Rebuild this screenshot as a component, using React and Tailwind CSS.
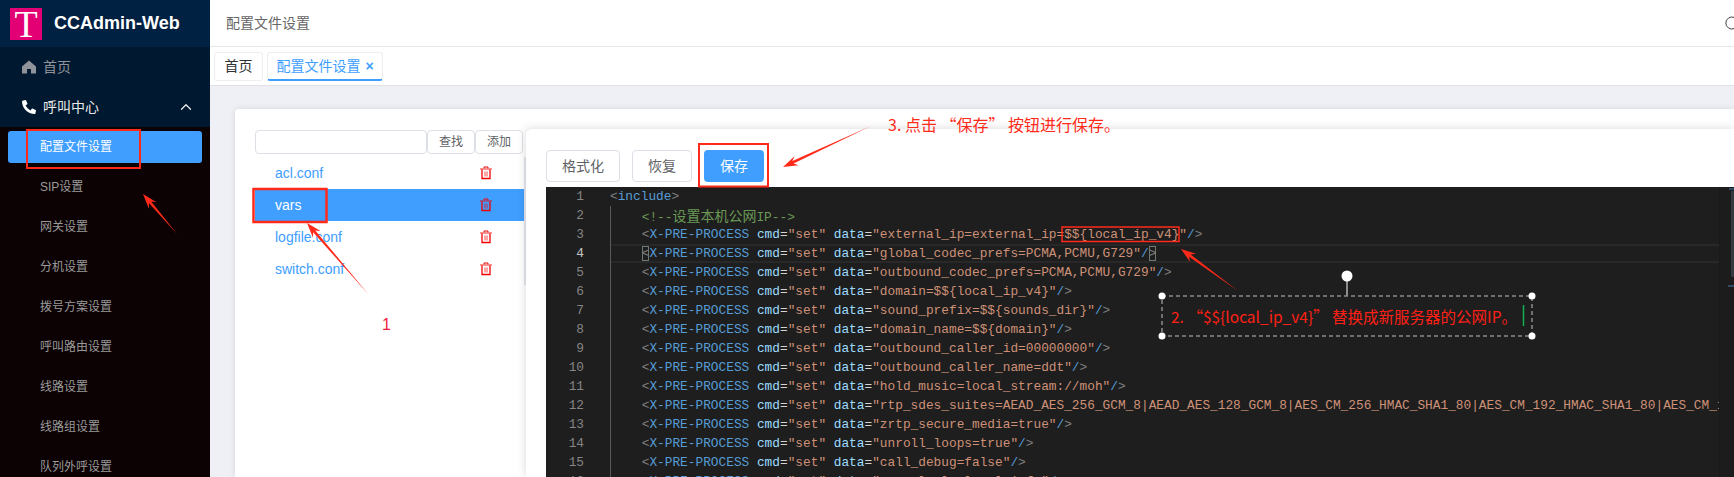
import { FaPhoneAlt } from "react-icons/fa";
import { ChevronUp } from "lucide-react";

const subMenus = ["配置文件设置", "SIP设置", "网关设置", "分机设置", "拨号方案设置", "呼叫路由设置", "线路设置", "线路组设置", "队列外呼设置"];
const files = ["acl.conf", "vars", "logfile.conf", "switch.conf"];

// value of data="..." for each X-PRE-PROCESS line
const codeLines = [
  { n: 3, v: "external_ip=external_ip=$${local_ip_v4}" },
  { n: 4, v: "global_codec_prefs=PCMA,PCMU,G729", active: true },
  { n: 5, v: "outbound_codec_prefs=PCMA,PCMU,G729" },
  { n: 6, v: "domain=$${local_ip_v4}" },
  { n: 7, v: "sound_prefix=$${sounds_dir}" },
  { n: 8, v: "domain_name=$${domain}" },
  { n: 9, v: "outbound_caller_id=00000000" },
  { n: 10, v: "outbound_caller_name=ddt" },
  { n: 11, v: "hold_music=local_stream://moh" },
  { n: 12, v: "rtp_sdes_suites=AEAD_AES_256_GCM_8|AEAD_AES_128_GCM_8|AES_CM_256_HMAC_SHA1_80|AES_CM_192_HMAC_SHA1_80|AES_CM_128_HMAC_SHA1_80|AES_CM_128_HMAC_SHA1_32" },
  { n: 13, v: "zrtp_secure_media=true" },
  { n: 14, v: "unroll_loops=true" },
  { n: 15, v: "call_debug=false" },
  { n: 16, v: "console_loglevel=info" },
];

// tapered annotation arrow, thin at the tail
const arrowPoints = (x1, y1, x2, y2) => {
  const len = Math.hypot(x2 - x1, y2 - y1);
  const ux = (x2 - x1) / len;
  const uy = (y2 - y1) / len;
  const px = -uy;
  const py = ux;
  const at = (back, side) => `${x2 - ux * back + px * side},${y2 - uy * back + py * side}`;
  return [`${x1},${y1}`, at(11, 1.4), at(15, 5), `${x2},${y2}`, at(15, -5), at(11, -1.4)].join(" ");
};

const TrashIcon = () => (
  <svg width="14" height="14" viewBox="0 0 14 14" fill="none" stroke="#f00000" className="shrink-0">
    <path d="M1 3H13" strokeWidth="1.4" opacity="0.6" />
    <path d="M5 2.4V1H9V2.4" strokeWidth="1" />
    <path d="M3 3.5V12.5H11V3.5" strokeWidth="1.3" />
    <path d="M6 5.5V10.5M8 5.5V10.5" strokeWidth="1" opacity="0.7" />
  </svg>
);

const Tag = ({ active }) => (
  <span className="text-[#808080]">
    <span className={active ? "outline outline-1 -outline-offset-1 outline-[#6f7a70]" : ""}>{"<"}</span>
  </span>
);

const CodeLine = ({ line }) => (
  <div className={`h-[19px] whitespace-pre ${line.active ? "border-y-2 border-[#282828] leading-[15px]" : "leading-[19px]"}`}>
    {"    "}
    <Tag active={line.active} />
    <span className="text-[#569cd6]">X-PRE-PROCESS</span>{" "}
    <span className="text-[#9cdcfe]">cmd</span>
    <span className="text-[#d4d4d4]">=</span>
    <span className="text-[#ce9178]">"set"</span>{" "}
    <span className="text-[#9cdcfe]">data</span>
    <span className="text-[#d4d4d4]">=</span>
    <span className="text-[#ce9178]">"{line.v}"</span>
    <span className="text-[#569cd6]">/</span>
    <span className={`text-[#808080] ${line.active ? "outline outline-1 -outline-offset-1 outline-[#6f7a70]" : ""}`}>{">"}</span>
  </div>
);

const Sidebar = () => (
  <aside className="w-[210px] shrink-0 bg-[#0c0203]">
    <div className="flex h-[47px] items-center bg-[#012142] pl-[10px]">
      <div className="flex h-[32px] w-[32px] items-center justify-center bg-[#e20074] font-['Liberation_Serif',serif] text-[38px] leading-[32px] text-white">
        T
      </div>
      <span className="ml-[12px] text-[18px] font-bold text-white">CCAdmin-Web</span>
    </div>
    <div className="bg-[#001830]">
      <div className="flex h-[40px] items-center pl-[22px] text-[14px] text-[#909399]">
        <svg width="14" height="14" viewBox="0 0 14 14" fill="#909399" className="mr-[7px]">
          <path d="M7 0.5L14 6.5V13.5H9V9H5V13.5H0V6.5Z" />
        </svg>
        首页
      </div>
      <div className="flex h-[40px] items-center pl-[22px] text-[14px] text-[#e8e8e8]">
        <FaPhoneAlt className="mr-[7px] h-[14px] w-[14px] text-white" />
        呼叫中心
        <ChevronUp className="ml-[78px] h-[18px] w-[18px] text-[#e8e8e8]" strokeWidth={1.75} />
      </div>
    </div>
    <div className="pt-[4px]">
      {subMenus.map((name, i) => (
        <div
          key={name}
          className={`mx-[8px] mb-[8px] flex h-[32px] items-center rounded-[3px] pl-[32px] text-[12px] ${i === 0 ? "bg-[#409eff] text-white" : "text-[#9a9a9a]"}`}
        >
          {name}
        </div>
      ))}
    </div>
  </aside>
);

const FileList = () => (
  <div className="w-[271px] shrink-0 pt-px">
    <div className="flex h-[24px] w-[268px]">
      <div className="w-[172px] rounded-[4px] border border-[#dcdfe6]" />
      <button className="w-[48px] rounded-[4px] border border-[#dcdfe6] text-[12px] text-[#606266]">查找</button>
      <button className="w-[48px] rounded-[4px] border border-[#dcdfe6] text-[12px] text-[#606266]">添加</button>
    </div>
    <div className="mt-[3px] border-r-2 border-[#e4e7ed]">
      {files.map((f) => (
        <div
          key={f}
          className={`flex h-[32px] items-center justify-between pr-[31px] pl-[20px] text-[14px] ${f === "vars" ? "bg-[#409eff] text-white" : "text-[#409eff]"}`}
        >
          {f}
          <TrashIcon />
        </div>
      ))}
    </div>
  </div>
);

const Editor = () => (
  <div className="mt-[5px] flex flex-1 overflow-hidden bg-[#1e1e1e] font-['Liberation_Mono',monospace] text-[12.8px]">
    <div className="w-[64px] shrink-0 pr-[26px] text-right leading-[19px] text-[#858585]">
      {Array.from({ length: 16 }, (_, i) => (
        <div key={i} className={`h-[19px] ${i === 3 ? "text-[#c6c6c6]" : ""}`}>
          {i + 1}
        </div>
      ))}
    </div>
    <div className="min-w-0 flex-1 overflow-hidden">
      <div className="h-[19px] leading-[19px] whitespace-pre text-[#569cd6]">
        <span className="text-[#808080]">{"<"}</span>include<span className="text-[#808080]">{">"}</span>
      </div>
      <div className="border-l border-[#5a5a5a]">
        <div className="h-[19px] leading-[19px] whitespace-pre text-[#6a9955]">
          {"    <!--"}
          <span className="font-['Noto_Sans_CJK_SC',sans-serif] text-[14px]">设置本机公网</span>
          {"IP-->"}
        </div>
        {codeLines.map((line) => (
          <CodeLine key={line.n} line={line} />
        ))}
      </div>
    </div>
    <div className="relative w-[15px] shrink-0 border-l border-[#191919] bg-[#1c1c1c]">
      <div className="absolute top-[1px] right-0 h-[2px] w-[5px] bg-[#2f4a63]" />
      <div className="absolute top-[4px] right-0 h-[86px] w-[3px] bg-[#333a40]" />
      <div className="absolute top-[98px] right-0 h-[2px] w-[6px] bg-[#2f4a63]" />
    </div>
  </div>
);

const Annotations = () => (
  <>
    <svg width="1734" height="477" className="pointer-events-none absolute top-0 left-0">
      <g fill="none" stroke="#ff2a1a">
        <rect x="27" y="130" width="113" height="38" strokeWidth="2" />
        <rect x="253.5" y="189" width="73" height="33" strokeWidth="2.5" />
        <rect x="699" y="144" width="69" height="42.5" strokeWidth="2" />
        <rect x="1062" y="227" width="117" height="14.5" strokeWidth="1.5" />
      </g>
      <g fill="#ff2a1a">
        <polygon points={arrowPoints(177, 234, 143, 194)} />
        <polygon points={arrowPoints(369, 295, 307, 223)} />
        <polygon points={arrowPoints(871, 126, 783, 167)} />
        <polygon points={arrowPoints(1238, 291, 1181, 249)} />
      </g>
      <rect x="1162" y="296" width="370" height="40" fill="none" stroke="#8c8c8c" strokeWidth="1.5" strokeDasharray="4 3" />
      <path d="M1347 281V296" stroke="#8c8c8c" strokeWidth="2" />
      <circle cx="1347" cy="276" r="5.5" fill="#fff" />
      <g fill="#fff">
        <circle cx="1162" cy="296" r="3.5" />
        <circle cx="1532" cy="296" r="3.5" />
        <circle cx="1162" cy="336" r="3.5" />
        <circle cx="1532" cy="336" r="3.5" />
      </g>
      <path d="M1523.5 305V326" stroke="#12b050" strokeWidth="1.5" />
    </svg>
    <span className="absolute top-[314px] left-[382px] text-[16px] leading-[22px] text-[#f5203e]">1</span>
    <span className="absolute top-[113px] left-[888px] font-['Noto_Sans_CJK_SC',sans-serif] text-[16px] leading-[22px] whitespace-pre text-[#ff2a1a]">
      3. 点击 “保存” 按钮进行保存。
    </span>
    <span className="absolute top-[304px] left-[1171px] font-['Noto_Sans_CJK_SC',sans-serif] text-[15.5px] leading-[24px] whitespace-pre text-[#ff2015]">
      2. “$${"{"}local_ip_v4{"}"}” 替换成新服务器的公网IP。
    </span>
  </>
);

const App = () => {
  return (
    <div className="relative flex h-[477px] w-[1734px] overflow-hidden bg-white font-['Liberation_Sans','Noto_Sans_CJK_SC',sans-serif]">
      <Sidebar />
      <main className="flex min-w-0 flex-1 flex-col">
        <div className="flex h-[47px] shrink-0 items-center justify-between border-b border-[#e6e6e6] pl-[16px] text-[14px] text-[#666666]">
          配置文件设置
          <svg width="11" height="14" viewBox="0 0 11 14" fill="none" stroke="#444444" strokeWidth="1">
            <path d="M11 1.4A6 6 0 1 0 11 12.6" />
          </svg>
        </div>
        <div className="flex h-[39px] shrink-0 items-start gap-[4px] border-b border-[#e0e2e8] pt-[5px] pl-[4px] text-[14px]">
          <div className="flex h-[29px] w-[49px] items-center justify-center rounded-[3px] border border-[#eeeeee] text-[#303133]">首页</div>
          <div className="flex h-[29px] w-[116px] items-center justify-center gap-[5px] rounded-[3px] border border-b-2 border-[#eeeeee] border-b-[#409eff] text-[#409eff]">
            配置文件设置 <span className="text-[14px] font-bold">×</span>
          </div>
        </div>
        <div className="min-h-0 flex-1 bg-[#eef0f5] pt-[23px] pl-[25px]">
          <div className="flex h-full rounded-tl-[4px] bg-white pt-[20px] pl-[20px] shadow-[0_0_6px_rgba(0,0,0,0.1)]">
            <FileList />
            <section className="flex min-w-0 flex-1 flex-col rounded-tl-[6px] bg-white pt-[21px] pl-[20px] shadow-[-1px_-1px_8px_rgba(0,0,0,0.13)]">
              <div className="flex gap-[12px] text-[14px]">
                <button className="h-[32px] w-[74px] rounded-[4px] border border-[#dcdfe6] text-[#606266]">格式化</button>
                <button className="h-[32px] w-[60px] rounded-[4px] border border-[#dcdfe6] text-[#606266]">恢复</button>
                <button className="h-[32px] w-[60px] rounded-[4px] bg-[#409eff] text-white">保存</button>
              </div>
              <Editor />
            </section>
          </div>
        </div>
      </main>
      <Annotations />
    </div>
  );
};

export default App;
